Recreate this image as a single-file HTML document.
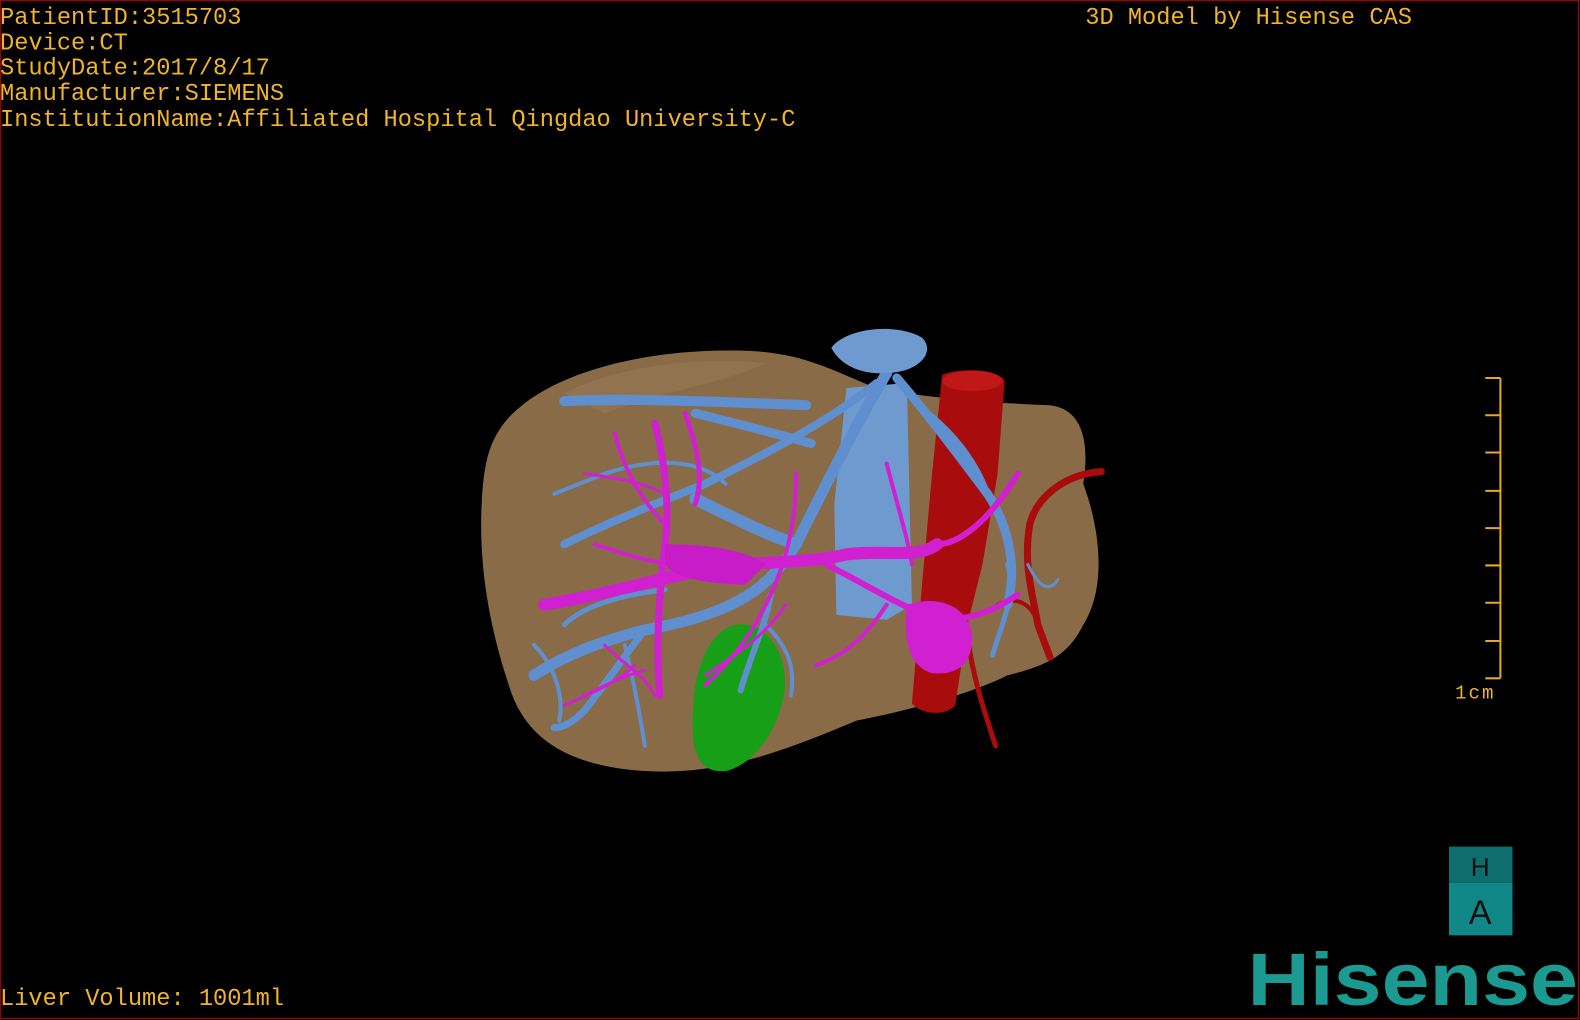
<!DOCTYPE html>
<html><head><meta charset="utf-8"><style>
html,body{margin:0;padding:0;background:#000;width:1580px;height:1020px;overflow:hidden}
svg{display:block}
</style></head><body>
<svg width="1580" height="1020" viewBox="0 0 1568 1012" preserveAspectRatio="none" xmlns="http://www.w3.org/2000/svg">
<rect x="0" y="0" width="1568" height="1012" fill="#000"/>
<rect x="0.5" y="0.5" width="1566" height="1010" fill="none" stroke="#8a0a0a" stroke-width="1.5"/>
<g font-family="Liberation Mono, monospace" font-size="23.5" fill="#f0b428">
<text x="0" y="24">PatientID:3515703</text>
<text x="0" y="49">Device:CT</text>
<text x="0" y="74">StudyDate:2017/8/17</text>
<text x="0" y="99">Manufacturer:SIEMENS</text>
<text x="0" y="125">InstitutionName:Affiliated Hospital Qingdao University-C</text>
<text x="1077" y="24">3D Model by Hisense CAS</text>
<text x="0" y="997">Liver Volume: 1001ml</text>
<text x="1444" y="693" font-size="19" letter-spacing="2">1cm</text>
</g>
<g stroke="#e8a820" stroke-width="2" fill="none">
<path d="M1489 375 V673"/>
<path d="M1474 375 H1489 M1474 412 H1489 M1474 449 H1489 M1474 487 H1489 M1474 524 H1489 M1474 561 H1489 M1474 598 H1489 M1474 636 H1489 M1474 673 H1489"/>
</g>
<path d="M500 420 C540 370 640 345 740 348 C800 350 830 370 870 385 C920 395 990 400 1040 402 C1080 405 1080 450 1075 480 C1090 520 1100 580 1075 620 C1060 650 1040 660 1000 670 C960 690 900 705 850 715 C790 740 720 770 640 765 C560 760 520 730 505 680 C485 620 475 560 478 500 C480 460 485 440 500 420 Z" fill="#8a6b48"/>
<path d="M560 390 C620 360 700 355 760 360 C720 380 650 390 600 410 Z" fill="#957652" opacity="0.7"/>
<path d="M840 385 L900 380 L905 600 L880 615 L830 610 L828 500 Z" fill="#6f9ad0"/>
<path d="M935 372 C950 365 990 365 997 378 L990 470 L975 560 L960 620 L948 700 C940 710 915 710 905 698 L915 580 L925 470 Z" fill="#a80c0c"/>
<ellipse cx="965" cy="378" rx="30" ry="10" fill="#c01818"/>
<g fill="none" stroke="#a80c0c" stroke-linecap="round">
<path d="M1093 468 C1060 470 1030 490 1022 520 C1015 560 1025 590 1030 620 L1042 652" stroke-width="7"/>
<path d="M960 630 C965 670 975 700 988 740" stroke-width="5"/>
<path d="M990 600 C1010 590 1025 600 1030 620" stroke-width="4"/>
</g>
<path d="M730 620 C760 615 785 650 778 690 C770 730 745 760 720 765 C690 768 685 740 688 700 C690 660 705 625 730 620 Z" fill="#17a017"/>
<g fill="none" stroke="#5f8fcf" stroke-linecap="round">
<path d="M560 398 C620 395 700 398 800 402" stroke-width="10"/>
<path d="M690 410 C730 420 770 430 805 440" stroke-width="9"/>
<path d="M880 370 C850 420 820 480 790 540 C760 590 720 610 640 625 C600 635 560 650 530 670" stroke-width="11"/>
<path d="M890 375 C920 410 950 450 980 490 C1000 520 1010 560 1000 600" stroke-width="9"/>
<path d="M870 380 C820 420 760 450 700 480 C650 500 600 520 560 540" stroke-width="8"/>
<path d="M690 495 C720 510 760 530 790 540" stroke-width="12"/>
<path d="M640 625 C620 650 600 680 580 705 C565 720 555 722 550 722" stroke-width="7"/>
<path d="M765 590 C760 620 745 650 735 685" stroke-width="6"/>
<path d="M980 490 C965 450 940 425 915 405" stroke-width="6"/>
<path d="M1000 560 C1010 590 990 630 985 650" stroke-width="5"/>
<path d="M720 480 C700 460 660 450 600 470 L550 490" stroke-width="4"/>
<path d="M560 620 C580 600 620 590 660 585" stroke-width="5"/>
<path d="M620 640 C630 680 635 710 640 740" stroke-width="4"/>
<path d="M1020 560 C1030 580 1040 590 1050 575" stroke-width="3"/>
<path d="M530 640 C550 660 560 690 555 715" stroke-width="4"/>
<path d="M760 620 C780 640 790 660 785 690" stroke-width="4"/>
</g>
<path d="M825 345 C840 325 890 320 915 335 C930 350 910 370 880 370 C860 372 835 365 825 345 Z" fill="#6f9ad0"/>
<g fill="none" stroke="#d020d0" stroke-linecap="round">
<path d="M540 600 C600 590 650 575 700 565 C760 555 800 560 840 550 C880 545 910 555 930 540" stroke-width="12"/>
<path d="M930 540 C950 540 980 520 1010 470" stroke-width="6"/>
<path d="M650 420 C660 460 665 500 660 540 C655 580 650 640 655 690" stroke-width="7"/>
<path d="M680 410 C690 440 700 470 690 500" stroke-width="5"/>
<path d="M610 430 C620 470 640 500 660 520" stroke-width="4"/>
<path d="M580 470 C620 475 640 480 660 490" stroke-width="3"/>
<path d="M590 540 C620 550 650 560 680 560" stroke-width="4"/>
<path d="M790 470 C790 520 780 560 760 600 C740 640 720 660 700 680" stroke-width="4"/>
<path d="M820 560 C860 580 890 600 920 610 C950 620 980 610 1010 590" stroke-width="6"/>
<path d="M880 600 C860 630 840 650 810 660" stroke-width="4"/>
<path d="M600 640 C620 660 640 670 650 690 M580 690 C600 680 620 670 640 665" stroke-width="3"/>
<path d="M560 700 C580 690 610 680 630 660" stroke-width="3"/>
<path d="M880 460 C890 500 900 530 905 560" stroke-width="4"/>
<path d="M780 600 C760 630 730 650 700 670" stroke-width="3"/>
</g>
<path d="M900 600 C930 590 960 600 965 630 C965 660 950 670 925 668 C905 662 895 640 900 600 Z" fill="#d020d0"/>
<path d="M660 540 C700 540 740 545 760 560 L740 580 C710 580 670 575 660 560 Z" fill="#c81cc8"/>
<rect x="1438" y="840" width="63" height="36" fill="#0e6e6e"/>
<rect x="1438" y="876" width="63" height="52" fill="#118888"/>
<g font-family="Liberation Sans, sans-serif" fill="#111" text-anchor="middle">
<text x="1469" y="869" font-size="26">H</text>
<text x="1469" y="917" font-size="34">A</text>
</g>
<text x="1238" y="997" font-family="Liberation Sans, sans-serif" font-weight="bold" font-size="74" fill="#1a9a90" textLength="328" lengthAdjust="spacingAndGlyphs">Hisense</text>
</svg>
</body></html>
